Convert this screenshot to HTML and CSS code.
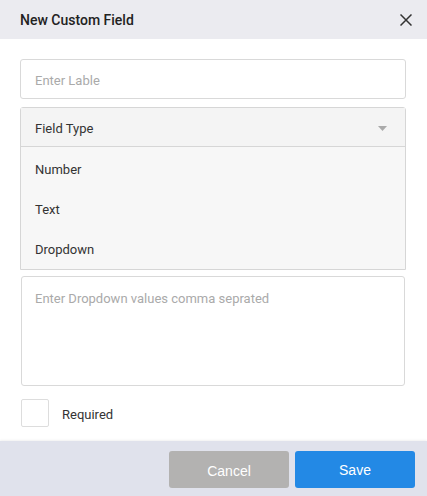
FILE: index.html
```html
<!DOCTYPE html>
<html>
<head>
<meta charset="utf-8">
<link rel="stylesheet" href="styles.css">
</head>
<body>
<div class="modal">
  <div class="header">
    <span class="title">New Custom Field</span>
    <svg class="close" width="12" height="12" viewBox="0 0 12 12"><path d="M0.5 0.5L11.5 11.5M11.5 0.5L0.5 11.5" stroke="#333" stroke-width="1.5" fill="none"/></svg>
  </div>
  <div class="body">
    <div class="input placeholder">Enter Lable</div>
    <div class="select-wrap">
      <div class="select">
        <span>Field Type</span>
        <svg width="9" height="5" viewBox="0 0 9 5"><path d="M0 0H9L4.5 5Z" fill="#aaa"/></svg>
      </div>
      <div class="options">
        <div class="option">Number</div>
        <div class="option">Text</div>
        <div class="option">Dropdown</div>
      </div>
    </div>
    <div class="textarea placeholder">Enter Dropdown values comma seprated</div>
    <div class="check-row">
      <div class="checkbox"></div>
      <span class="check-label">Required</span>
    </div>
  </div>
  <div class="footer">
    <button class="btn cancel">Cancel</button>
    <button class="btn save">Save</button>
  </div>
</div>
</body>
</html>
```
FILE: styles.css
```css
* { box-sizing: border-box; }
html, body { margin: 0; padding: 0; background: #fff; }
body { font-family: Roboto, "Noto Sans", sans-serif; color: #333; width: 427px; height: 496px; overflow: hidden; }
.modal { display: flex; flex-direction: column; height: 496px; }
.header {
  height: 39px; background: #ebebf0; display: flex; align-items: center;
  justify-content: space-between; padding: 0 15px 0 20px;
}
.title { font-size: 14px; font-weight: 500; color: #222; padding-top: 1px; }
.close { display: block; }
.body { flex: 1; padding: 20px 21px 0 20px; display: flex; flex-direction: column; }
.placeholder { color: #aaa; }
.input {
  height: 40px; border: 1px solid #d9d9d9; border-radius: 3px;
  display: flex; align-items: center; padding: 2px 0 0 14px; font-size: 13px;
}
.select-wrap { margin-top: 8px; border: 1px solid #d6d6d6; border-radius: 3px 3px 0 0; }
.select {
  height: 39px; background: #f4f4f4; display: flex; align-items: center;
  justify-content: space-between; padding: 3px 18px 0 14px; font-size: 13px; color: #333;
  border-bottom: 1px solid #d6d6d6;
}
.select svg { display: block; margin-top: -1px; }
.options { background: #f7f7f7; padding-top: 2px; }
.option { height: 40px; display: flex; align-items: center; padding-left: 14px; font-size: 13px; color: #333; }
.textarea {
  margin-top: 6px; margin-left: 1px; margin-right: 1px; height: 110px; border: 1px solid #d9d9d9; border-radius: 3px;
  padding: 14px 0 0 13px; font-size: 13px;
}
.check-row { margin-top: 13px; margin-left: 1px; display: flex; align-items: center; font-size: 13px; color: #333; }
.check-label { padding-top: 2px; }
.checkbox { width: 28px; height: 28px; border: 1px solid #ddd; border-radius: 2px; margin-right: 13px; }
.footer {
  height: 55px; background: #e0e2ec; display: flex; justify-content: flex-end;
  align-items: flex-start; padding: 10px 12px 0 0; gap: 6px;
  box-shadow: 0 -1px 2px rgba(0,0,0,0.06);
}
.btn {
  width: 120px; height: 37px; border: none; border-radius: 3px; color: #fff;
  font-family: "Liberation Sans", Arial, sans-serif; font-size: 14px; padding: 0;
}
.cancel { background: #b3b2b1; padding-top: 3px; }
.save { background: #2389e5; }
```
